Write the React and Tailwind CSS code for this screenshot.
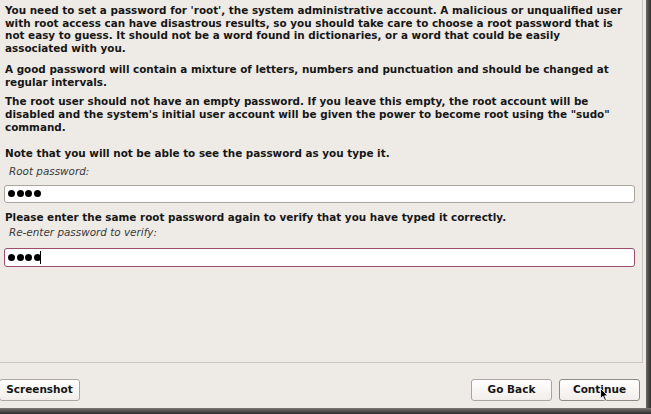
export default function App() {
  const dots = (n) => (
    <span className="flex items-center gap-[1.5px]">
      {Array.from({ length: n }).map((_, i) => (
        <span key={i} className="block w-[7px] h-[7px] rounded-full bg-black" />
      ))}
    </span>
  )

  return (
    <div
      className="relative w-[651px] h-[414px] overflow-hidden bg-[#eeebe7] text-[#161616] flex flex-col"
      style={{ fontFamily: '"DejaVu Sans", "Liberation Sans", sans-serif' }}
    >
      <div className="flex flex-1 min-h-0">
        <div className="flex-1 flex flex-col">
          {/* Main panel */}
          <div className="h-[363px] w-[643px] border-r border-b border-[#cbc6c0] pl-[5px] pt-[4px] text-[10.4px] leading-[12.7px] font-bold whitespace-nowrap">
            <p>
              You need to set a password for 'root', the system administrative account. A malicious or unqualified user<br />
              with root access can have disastrous results, so you should take care to choose a root password that is<br />
              not easy to guess. It should not be a word found in dictionaries, or a word that could be easily<br />
              associated with you.
            </p>
            <p className="mt-[8px]">
              A good password will contain a mixture of letters, numbers and punctuation and should be changed at<br />
              regular intervals.
            </p>
            <p className="mt-[7px]">
              The root user should not have an empty password. If you leave this empty, the root account will be<br />
              disabled and the system's initial user account will be given the power to become root using the "sudo"<br />
              command.
            </p>
            <p className="mt-[14px]">Note that you will not be able to see the password as you type it.</p>
            <p className="mt-[5px] pl-[4px] italic font-normal text-[#3a3a3a]">Root password:</p>
            <div className="mt-[7px] mr-[7px] -ml-[1px] h-[18px] bg-white border border-[#aaa59f] rounded-[3px] flex items-center pl-[3px]">
              {dots(4)}
            </div>
            <p className="mt-[8.5px]">Please enter the same root password again to verify that you have typed it correctly.</p>
            <p className="mt-[2.5px] pl-[4px] italic font-normal text-[#3a3a3a]">Re-enter password to verify:</p>
            <div className="mt-[9px] mr-[7px] -ml-[1px] h-[19px] bg-white border border-[#9d4c69] rounded-[3px] flex items-center pl-[3px]">
              {dots(4)}
              <span className="block w-px h-[13px] bg-black -ml-[1px]" />
            </div>
          </div>

          {/* Footer buttons */}
          <div className="flex-1 flex items-start justify-between pr-[6px] pt-[16px]">
            <button className="h-[22px] w-[81px] -ml-[1px] rounded-[3px] border border-[#aaa59f] bg-gradient-to-b from-white to-[#f1eeea] text-[10.5px] font-bold">
              Screenshot
            </button>
            <div className="flex gap-[7px]">
              <button className="h-[22px] w-[81px] rounded-[3px] border border-[#aaa59f] bg-gradient-to-b from-white to-[#f1eeea] text-[10.5px] font-bold">
                Go Back
              </button>
              <button className="h-[22px] w-[81px] rounded-[3px] border border-[#8f8a85] bg-gradient-to-b from-white to-[#f1eeea] text-[10.5px] font-bold">
                Continue
              </button>
            </div>
          </div>
        </div>
        {/* window edge, right */}
        <div className="w-[5px] bg-gradient-to-r from-[#6d6a67] to-[#2f2f2f]" />
      </div>
      {/* window edge, bottom */}
      <div className="h-[6px] bg-gradient-to-b from-[#7a7774] to-[#2c2c2c]" />

      {/* mouse pointer */}
      <svg className="absolute left-[600px] top-[388px]" width="9" height="14" viewBox="0 0 9 14">
        <path d="M0.5 0.5 L0.5 10.5 L3 8.3 L4.8 12.5 L6.3 11.8 L4.6 7.8 L7.8 7.8 Z" fill="#000" stroke="#fff" strokeWidth="0.8" />
      </svg>
    </div>
  )
}
